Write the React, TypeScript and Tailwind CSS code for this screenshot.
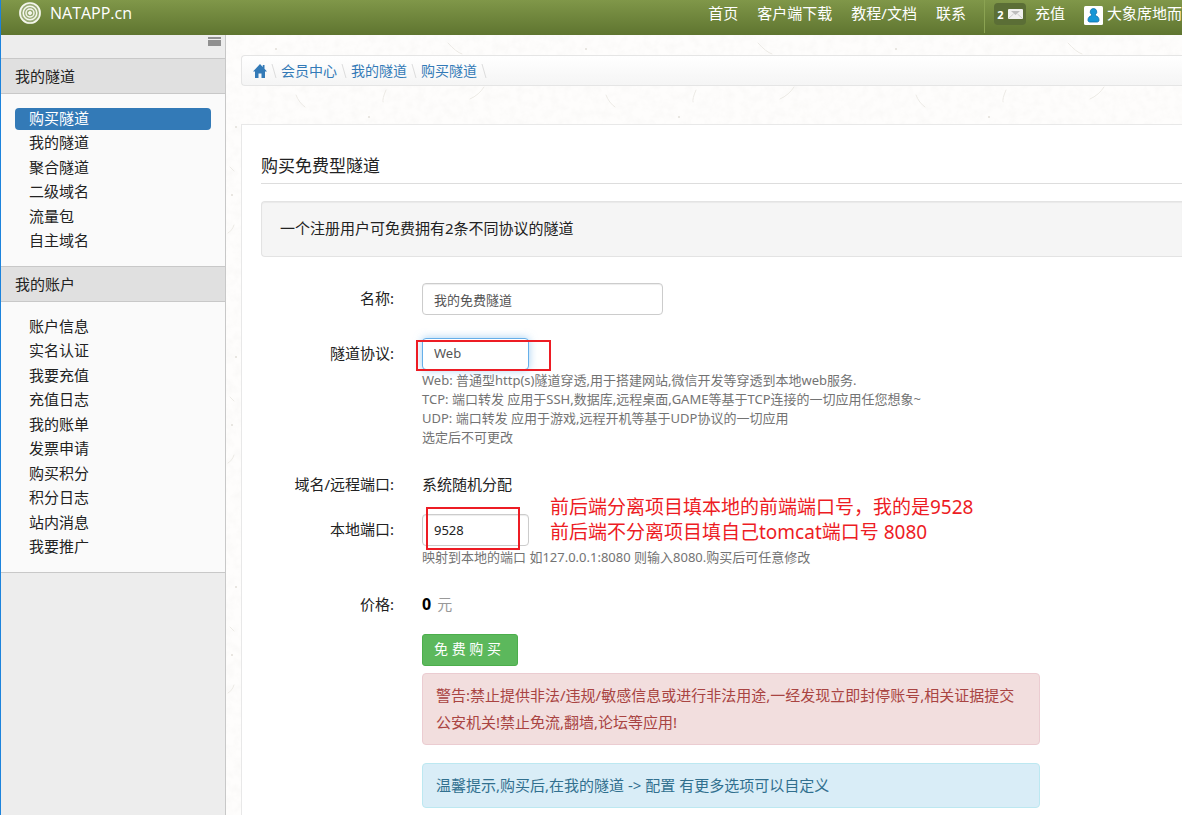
import type { ReactNode } from "react";

const navLinks = ["首页", "客户端下载", "教程/文档", "联系"];
const tunnelLinks = ["购买隧道", "我的隧道", "聚合隧道", "二级域名", "流量包", "自主域名"];
const accountLinks = [
  "账户信息",
  "实名认证",
  "我要充值",
  "充值日志",
  "我的账单",
  "发票申请",
  "购买积分",
  "积分日志",
  "站内消息",
  "我要推广",
];
const crumbs = ["会员中心", "我的隧道", "购买隧道"];

function Logo() {
  return (
    <svg viewBox="0 0 24 24" className="size-6" fill="none" stroke="#f4f6ec" aria-hidden="true">
      <circle cx="12" cy="12" r="11" fill="#9aac77" stroke="none" />
      <circle cx="12" cy="12" r="10" strokeWidth="1.7" />
      <circle cx="12" cy="12" r="6.800" strokeWidth="1.5" />
      <circle cx="12" cy="12" r="4" strokeWidth="1.4" />
      <circle cx="12" cy="12" r="1.500" fill="#f4f6ec" />
    </svg>
  );
}

function PaperTexture() {
  return (
    <svg className="absolute inset-0 size-full" aria-hidden="true">
      <defs>
        <filter id="grain">
          <feTurbulence type="fractalNoise" baseFrequency="0.12" numOctaves="4" seed="8" />
          <feColorMatrix values="0 0 0 0 0.5  0 0 0 0 0.49  0 0 0 0 0.46  0.12 0 0 0 -0.045" />
        </filter>
        <pattern id="fibres" width="310" height="230" patternUnits="userSpaceOnUse">
          <g fill="none" stroke="#eceae5" strokeLinecap="round">
            <path d="M222 8q8 9 14 11M258 52q-5 8-14 12M70 60q3 8 9 12M160 55q-4 9-3 12M4 132l4 4M8 190q-2 6-6 8" />
          </g>
          <g fill="#e2dfd9">
            <circle cx="50" cy="14" r="1" />
            <circle cx="143" cy="82" r="1" />
            <circle cx="10" cy="92" r="1" />
            <circle cx="6" cy="160" r="1" />
          </g>
        </pattern>
      </defs>
      <rect width="100%" height="100%" filter="url(#grain)" />
      <rect width="100%" height="100%" fill="url(#fibres)" />
    </svg>
  );
}

function MenuSection({
  title,
  items,
  active,
  listClass,
}: {
  title: string;
  items: string[];
  active?: string;
  listClass: string;
}) {
  return (
    <section>
      <h2 className="flex h-9 items-center border-y border-[#c8c8c8] bg-[#e0e0e0] px-3.5 text-[15px]">
        {title}
      </h2>
      <div className="bg-[#fafafa] p-3.5">
        <ul className={listClass}>
          {items.map((item) => (
            <li key={item}>
              <a
                href="#"
                className={
                  item === active
                    ? "block rounded bg-[#337ab7] px-3.5 pb-0.5 text-[15px] leading-5 text-white"
                    : "block px-3.5 pb-0.5 text-[15px] leading-5"
                }
              >
                {item}
              </a>
            </li>
          ))}
        </ul>
      </div>
    </section>
  );
}

function Row({
  label,
  htmlFor,
  tall,
  children,
}: {
  label?: string;
  htmlFor?: string;
  tall?: boolean;
  children: ReactNode;
}) {
  return (
    <div className={tall ? "flex gap-7" : "flex gap-7 pt-[7px]"}>
      <div
        className={
          tall
            ? "w-[133px] shrink-0 text-right text-[15px] leading-[30px]"
            : "w-[133px] shrink-0 text-right text-[15px] leading-[22px]"
        }
      >
        {htmlFor ? <label htmlFor={htmlFor}>{label}</label> : label}
      </div>
      <div className="min-w-0 flex-1">{children}</div>
    </div>
  );
}

export default function App() {
  return (
    <div className="flex min-h-screen flex-col overflow-x-hidden border-l border-[#1c83dc] bg-[#fefdfc] font-['Noto_Sans','Noto_Sans_CJK_SC',sans-serif] text-[#222]">
      <header className="flex h-[35px] items-start justify-between overflow-hidden bg-linear-to-b from-[#809749] to-[#5f7530] text-[15px] whitespace-nowrap text-white">
        <a href="#" className="flex items-center gap-2 pt-px pl-[17px]">
          <Logo />
          <span className="font-['Open_Sans',sans-serif] text-base leading-6">NATAPP.cn</span>
        </a>
        <div className="flex">
          <nav className="flex gap-[19px] pr-[18px] leading-[27px]">
            {navLinks.map((link) => (
              <a key={link} href="#">
                {link}
              </a>
            ))}
          </nav>
          <div className="flex h-[33px] border-l border-[#8ba352] pl-[9px] leading-[27px]">
            <a
              href="#"
              className="mt-[3px] mr-[9px] flex h-[22px] w-8 items-center justify-center gap-1 rounded-sm bg-[#5b6e36] text-[11px] font-bold"
            >
              2
              <svg viewBox="0 0 15 10" className="h-2.5 w-[15px]" aria-hidden="true">
                <rect width="15" height="10" rx="1" fill="#f1f1f1" />
                <path d="M1 9l4.500-4M14 9l-4.500-4" stroke="#ccc" fill="none" />
                <path d="M3 2l4.500 4L12 2z" fill="#bdbdbd" />
              </svg>
            </a>
            <a href="#" className="mr-[19px]">
              充值
            </a>
            <a href="#" className="flex gap-1">
              <svg viewBox="0 0 19 19" className="mt-1.5 size-[19px]" aria-hidden="true">
                <rect width="19" height="19" rx="1.500" fill="#fff" />
                <path
                  d="M9.500 2.500a3.300 3.300 0 0 1 2 5.900v1.300c2.200.5 3.500 2 3.500 4.300 0 1.300-.6 2-2 2H6c-1.400 0-2-.7-2-2 0-2.300 1.300-3.800 3.500-4.300V8.400a3.300 3.300 0 0 1 2-5.900z"
                  fill="#1596d6"
                  stroke="#0b6fa8"
                  strokeWidth=".8"
                />
              </svg>
              大象席地而
            </a>
          </div>
        </div>
      </header>

      <div className="flex flex-1">
        <aside className="w-[225px] shrink-0 border-r border-[#c8c8c8] bg-[#ededed]">
          <div className="flex h-[23px] justify-end pt-0.5 pr-1">
            <button type="button" aria-label="折叠菜单" className="h-[9px] w-[13px]">
              <svg viewBox="0 0 13 9" className="block h-[9px] w-[13px]" fill="#909090">
                <rect width="13" height="2" />
                <rect y="3" width="13" height="6" />
              </svg>
            </button>
          </div>
          <MenuSection
            title="我的隧道"
            items={tunnelLinks}
            active="购买隧道"
            listClass="flex h-36 flex-col justify-between"
          />
          <MenuSection
            title="我的账户"
            items={accountLinks}
            listClass="flex h-[242px] flex-col justify-between"
          />
          <div className="border-t border-[#c8c8c8]" />
        </aside>

        <main className="relative min-w-0 flex-1">
          <PaperTexture />
          <div className="relative flex h-full flex-col pt-5 pl-[15px]">
            <nav className="flex h-[31px] items-center rounded-l border border-r-0 border-[#e5e5e5] bg-linear-to-b from-white to-[#f5f5f5] pl-[11px] text-sm text-[#337ab7]">
              <a href="#" aria-label="首页">
                <svg viewBox="0 0 14 14" className="size-3.5" fill="currentColor" aria-hidden="true">
                  <path d="M7 0L0 7.500h2V14h3.500V9.500h3V14H12V7.500h2L11.500 4.800V1H9.800v2z" />
                </svg>
              </a>
              <Slash />
              {crumbs.map((crumb) => (
                <span key={crumb} className="flex items-center">
                  <a href="#">{crumb}</a>
                  <Slash />
                </span>
              ))}
            </nav>

            <div className="mt-[38px] flex-1 border-t border-l border-[#e8e8e8] bg-white pt-[29px] pl-[19px]">
              <h1 className="border-b border-[#ddd] pb-[5px] text-[17px] leading-6">购买免费型隧道</h1>
              <p className="mt-[17px] rounded-l border border-r-0 border-[#e3e3e3] bg-[#f5f5f5] px-[18px] pb-0.5 text-[15px] leading-[52px] shadow-[inset_0_1px_1px_rgba(0,0,0,0.05)]">
                一个注册用户可免费拥有2条不同协议的隧道
              </p>

              <form className="mt-[26px] flex flex-col gap-[19px]" onSubmit={(e) => e.preventDefault()}>
                <Row label="名称:" htmlFor="name" tall>
                  <div className="pb-1">
                    <input
                      id="name"
                      defaultValue="我的免费隧道"
                      className="block h-8 w-[241px] rounded border border-[#ccc] bg-white px-[11px] text-[13px] text-[#555] shadow-[inset_0_1px_1px_rgba(0,0,0,0.075)]"
                    />
                  </div>
                </Row>
                <Row label="隧道协议:" htmlFor="protocol" tall>
                  <div className="relative w-[107px]">
                    <select
                      id="protocol"
                      defaultValue="Web"
                      className="block h-8 w-full appearance-none rounded border border-[#66afe9] bg-white px-[11px] text-[13px] text-[#555] shadow-[0_0_8px_rgba(102,175,233,0.6)] outline-none"
                    >
                      <option>Web</option>
                      <option>TCP</option>
                      <option>UDP</option>
                    </select>
                    <div className="pointer-events-none absolute top-0.5 -left-1.5 h-[31px] w-[135px] border-2 border-[#ed1c24]" />
                  </div>
                  <p className="pt-px text-[13px] leading-[19px] text-[#737373]">
                    Web: 普通型http(s)隧道穿透,用于搭建网站,微信开发等穿透到本地web服务.
                    <br />
                    TCP: 端口转发 应用于SSH,数据库,远程桌面,GAME等基于TCP连接的一切应用任您想象~
                    <br />
                    UDP: 端口转发 应用于游戏,远程开机等基于UDP协议的一切应用
                    <br />
                    选定后不可更改
                  </p>
                </Row>
                <Row label="域名/远程端口:">
                  <p className="text-[15px] leading-[22px]">系统随机分配</p>
                </Row>
                <Row label="本地端口:" htmlFor="port" tall>
                  <div className="relative w-[107px]">
                    <input
                      id="port"
                      defaultValue="9528"
                      className="block h-8 w-full rounded border border-[#ccc] bg-white px-[11px] text-[13px] text-[#222] shadow-[inset_0_1px_1px_rgba(0,0,0,0.075)]"
                    />
                    <div className="pointer-events-none absolute -top-[7px] left-1 h-[43px] w-[94px] border-2 border-[#ed1c24]" />
                    <p className="absolute -top-[19px] left-32 text-[19px] leading-[25px] whitespace-nowrap text-[#ed1c24]">
                      前后端分离项目填本地的前端端口号，我的是9528
                      <br />
                      前后端不分离项目填自己tomcat端口号 8080
                    </p>
                  </div>
                  <p className="pt-0.5 text-[13px] leading-[19px] text-[#737373]">
                    映射到本地的端口 如127.0.0.1:8080 则输入8080.购买后可任意修改
                  </p>
                </Row>
                <Row label="价格:">
                  <p className="flex gap-1.5 text-[15px] leading-[22px] text-[#999]">
                    <strong className="text-base leading-[22px] text-black">0</strong>元
                  </p>
                </Row>
                <Row tall>
                  <button
                    type="submit"
                    className="block h-8 w-24 rounded-[3px] border border-[#4cae4c] bg-[#5cb85c] px-[11px] pb-0.5 text-left text-sm whitespace-nowrap text-white"
                  >
                    免 费 购 买
                  </button>
                  <p className="mt-[7px] max-w-[618px] rounded border border-[#ebccd1] bg-[#f2dede] px-[13px] py-2 text-[15px] leading-[27px] text-[#a94442]">
                    警告:禁止提供非法/违规/敏感信息或进行非法用途,一经发现立即封停账号,相关证据提交公安机关!禁止免流,翻墙,论坛等应用!
                  </p>
                  <p className="mt-[18px] max-w-[618px] rounded border border-[#bce8f1] bg-[#d9edf7] px-[13px] py-2 text-[15px] leading-[27px] text-[#31708f]">
                    温馨提示,购买后,在我的隧道 -&gt; 配置 有更多选项可以自定义
                  </p>
                </Row>
              </form>
            </div>
          </div>
        </main>
      </div>
    </div>
  );
}

function Slash() {
  return (
    <svg viewBox="0 0 14 16" className="h-4 w-3.5" aria-hidden="true">
      <path d="M5 1l4 14" stroke="#ddd" fill="none" />
    </svg>
  );
}
